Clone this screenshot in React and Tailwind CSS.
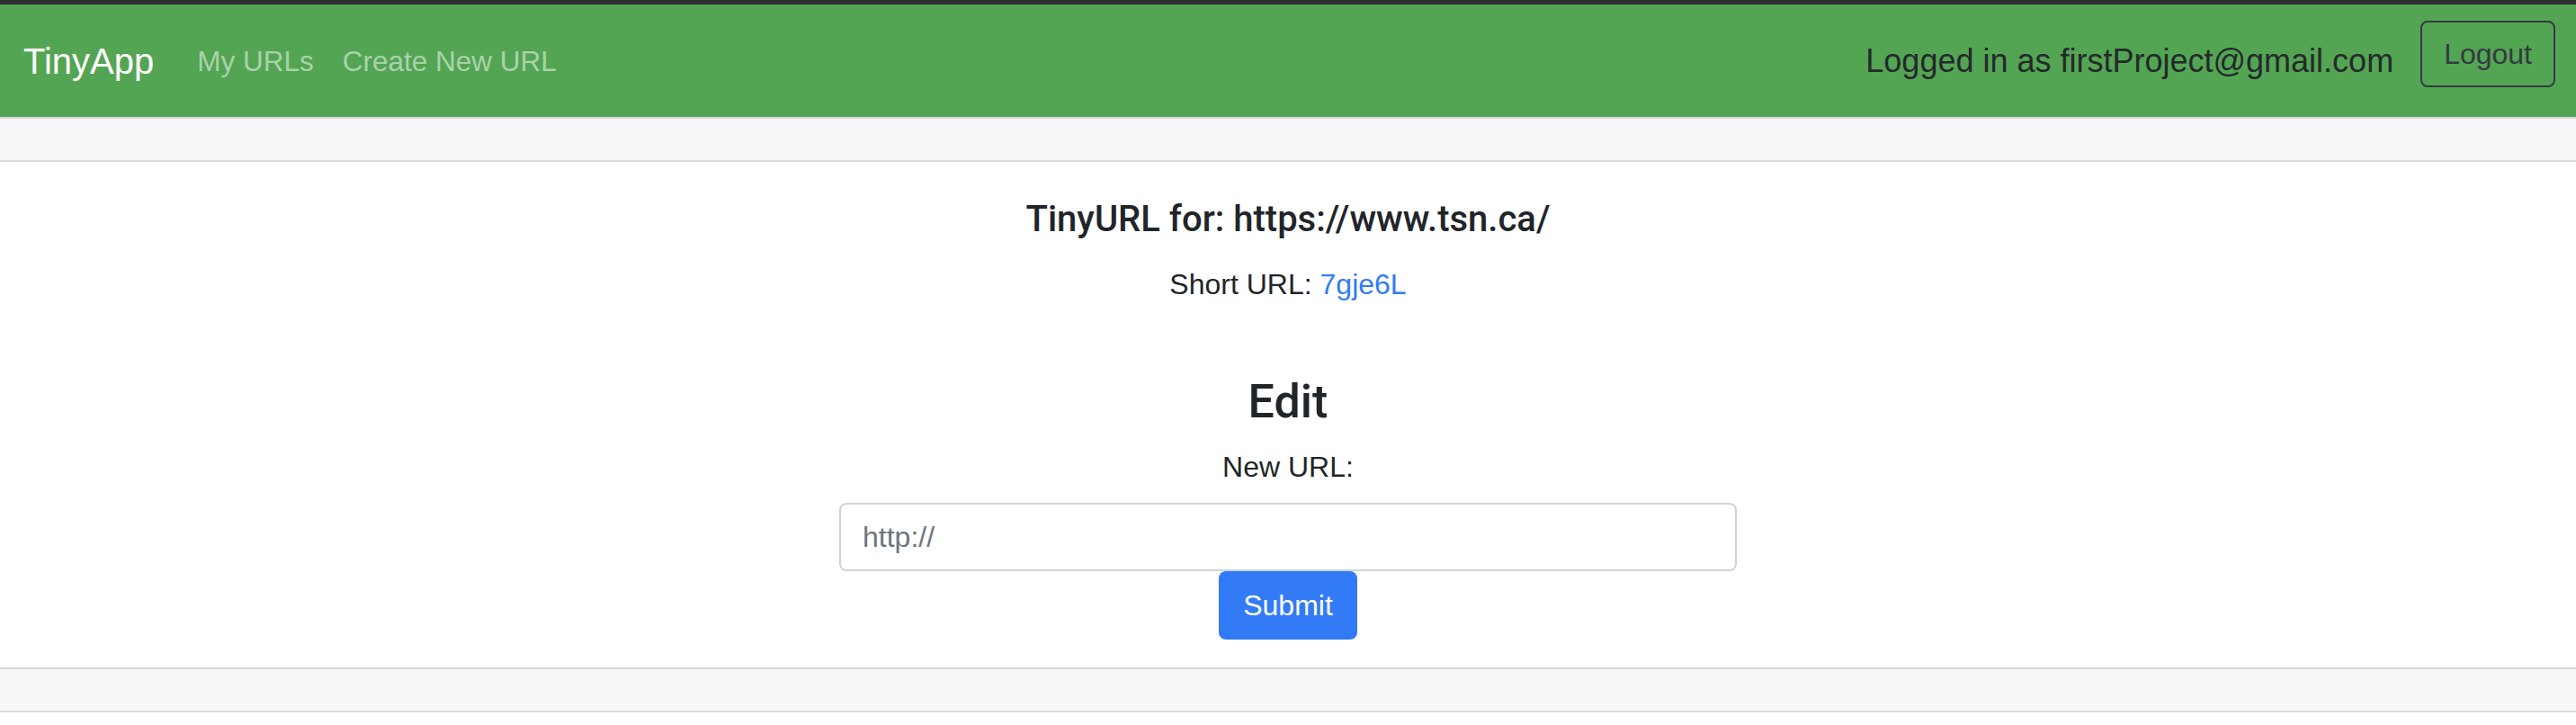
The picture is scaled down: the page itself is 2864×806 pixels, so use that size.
import React from "react";

function Navbar() {
  return (
    <nav className="flex h-[125px] items-center justify-between bg-[#53a553] pl-[26px] pr-[23px]">
      {/* left side */}
      <div className="flex items-center">
        <a href="#" className="mr-[32px] text-[40px] leading-[60px] text-white">
          TinyApp
        </a>
        <a href="#" className="px-[16px] text-[31.5px] leading-[48px] text-white/50">
          My URLs
        </a>
        <a href="#" className="px-[16px] text-[31.5px] leading-[48px] text-white/50">
          Create New URL
        </a>
      </div>

      {/* right side */}
      <div className="flex items-center">
        <span className="text-[36px] leading-[54px] text-[#25292b]">
          Logged in as firstProject@gmail.com
        </span>
        <button className="mb-[15px] ml-[30px] h-[74px] rounded-[8px] border-2 border-[#343a40] px-[24px] text-[32px] leading-[48px] text-[#343a40]">
          Logout
        </button>
      </div>
    </nav>
  );
}

export default function App() {
  return (
    <div className="min-h-[806px] bg-white font-['Liberation_Sans',Arial,sans-serif] text-[#212529]">
      <div className="h-[5px] bg-[#2e2f33]" />
      <Navbar />

      {/* card */}
      <div className="border-y-2 border-[#dadada]">
        <div className="h-[48px] border-b-2 border-[#dadada] bg-[#f7f7f7]" />

        <div className="px-[40px] pb-[31px] pt-[40px] text-center">
          <h5 className="mb-[24px] font-['Roboto',sans-serif] text-[40px] font-medium leading-[48px]">
            TinyURL for: https://www.tsn.ca/
          </h5>
          <p className="text-[32px] leading-[48px]">
            Short URL:{" "}
            <a href="#" className="text-[#337bf6]">
              7gje6L
            </a>
          </p>

          <h3 className="mb-[17px] mt-[76px] font-['Roboto',sans-serif] text-[52px] font-medium leading-[62px]">
            Edit
          </h3>
          <form className="flex flex-col items-center" onSubmit={(e) => e.preventDefault()}>
            <label className="mb-[16px] text-[32px] leading-[48px]">New URL:</label>
            <input
              type="text"
              placeholder="http://"
              className="h-[76px] w-[998px] rounded-[8px] border-2 border-[#ced4da] px-[24px] text-[32px] outline-none placeholder:text-[#6c757d]"
            />
            <button
              type="submit"
              className="h-[76px] rounded-[8px] bg-[#337bf6] px-[27px] text-[32px] leading-[48px] text-white"
            >
              Submit
            </button>
          </form>
        </div>

        <div className="h-[48px] border-t-2 border-[#dadada] bg-[#f7f7f7]" />
      </div>
    </div>
  );
}
